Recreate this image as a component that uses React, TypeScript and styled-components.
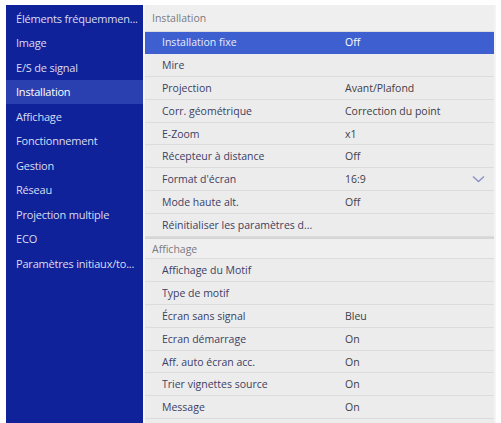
import React from "react"
import styled, { createGlobalStyle } from "styled-components"

const GlobalStyle = createGlobalStyle`
  html, body {
    margin: 0;
    padding: 0;
    background: #ffffff;
  }
  body {
    font-family: "Open Sans", "Noto Sans", sans-serif;
  }
`

const Screen = styled.div`
  width: 501px;
  height: 423px;
  box-sizing: border-box;
  padding: 5px 5px 0 6px;
  overflow: hidden;
`

const Frame = styled.div`
  display: flex;
  height: 418px;
  gap: 2px;
  background: #f6f6f6;
`

const Sidebar = styled.div`
  width: 137px;
  flex-shrink: 0;
  background: #10229a;
  padding-top: 1px;
  box-sizing: border-box;
`

const SideItem = styled.div<{ $active?: boolean }>`
  height: 24.5px;
  display: flex;
  align-items: center;
  padding-left: 10px;
  font-size: 11px;
  letter-spacing: -0.2px;
  color: ${(p) => (p.$active ? "#ffffff" : "#d9ddf2")};
  background: ${(p) => (p.$active ? "#2b40b0" : "transparent")};
  white-space: nowrap;
  overflow: hidden;
`

const Panel = styled.div`
  flex: 1;
  background: #ececec;
  overflow: hidden;
  border-right: 2px solid #f4f4f4;
`

const SectionHeader = styled.div<{ $first?: boolean }>`
  height: ${(p) => (p.$first ? "26.5px" : "22.8px")};
  display: flex;
  align-items: center;
  padding-left: 7px;
  font-size: 10.5px;
  color: #7a7a82;
  background: #efefef;
  box-sizing: border-box;
  border-top: ${(p) => (p.$first ? "none" : "2px solid #d6d6d6")};
  border-bottom: 1px solid #dcdcdc;
`

const Row = styled.div<{ $selected?: boolean }>`
  height: 22.8px;
  display: grid;
  grid-template-columns: 183px 1fr 22px;
  align-items: center;
  padding-left: 17px;
  box-sizing: border-box;
  font-size: 10.5px;
  background: ${(p) => (p.$selected ? "#3d5fcf" : "transparent")};
  border-bottom: 1px solid ${(p) => (p.$selected ? "#3d5fcf" : "#dcdcdc")};
`

const Label = styled.span<{ $selected?: boolean }>`
  color: ${(p) => (p.$selected ? "#e8ecfb" : "#3c4064")};
  white-space: nowrap;
  overflow: hidden;
`

const Value = styled.span<{ $selected?: boolean }>`
  color: ${(p) => (p.$selected ? "#ffffff" : "#404046")};
  white-space: nowrap;
`

const Chevron = () => (
  <svg width="13" height="8" viewBox="0 0 13 8">
    <path d="M1 1.5 L6.5 6.5 L12 1.5" fill="none" stroke="#8c90c8" strokeWidth="1.4" />
  </svg>
)

const sideItems = [
  "Éléments fréquemmen...",
  "Image",
  "E/S de signal",
  "Installation",
  "Affichage",
  "Fonctionnement",
  "Gestion",
  "Réseau",
  "Projection multiple",
  "ECO",
  "Paramètres initiaux/to...",
]

type Item = { label: string; value?: string; selected?: boolean; dropdown?: boolean }

const installation: Item[] = [
  { label: "Installation fixe", value: "Off", selected: true },
  { label: "Mire" },
  { label: "Projection", value: "Avant/Plafond" },
  { label: "Corr. géométrique", value: "Correction du point" },
  { label: "E-Zoom", value: "x1" },
  { label: "Récepteur à distance", value: "Off" },
  { label: "Format d'écran", value: "16:9", dropdown: true },
  { label: "Mode haute alt.", value: "Off" },
  { label: "Réinitialiser les paramètres d..." },
]

const affichage: Item[] = [
  { label: "Affichage du Motif" },
  { label: "Type de motif" },
  { label: "Écran sans signal", value: "Bleu" },
  { label: "Ecran démarrage", value: "On" },
  { label: "Aff. auto écran acc.", value: "On" },
  { label: "Trier vignettes source", value: "On" },
  { label: "Message", value: "On" },
  { label: "Fond d'écran", value: "Off" },
]

const renderRows = (items: Item[]) =>
  items.map((it, i) => (
    <Row key={`${it.label}-${i}`} $selected={it.selected}>
      <Label $selected={it.selected}>{it.label}</Label>
      <Value $selected={it.selected}>{it.value}</Value>
      {it.dropdown ? <Chevron /> : <span />}
    </Row>
  ))

const App = () => {
  return (
    <Screen>
      <GlobalStyle />
      <Frame>
        <Sidebar>
          {sideItems.map((s) => (
            <SideItem key={s} $active={s === "Installation"}>
              {s}
            </SideItem>
          ))}
        </Sidebar>
        <Panel>
          <SectionHeader $first>Installation</SectionHeader>
          {renderRows(installation)}
          <SectionHeader>Affichage</SectionHeader>
          {renderRows(affichage)}
        </Panel>
      </Frame>
    </Screen>
  )
}

export default App
